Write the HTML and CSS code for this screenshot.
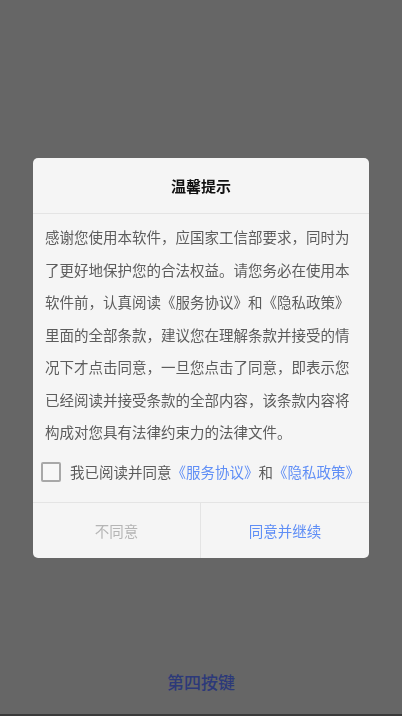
FILE: index.html
```html
<!DOCTYPE html>
<html lang="zh-CN">
<head>
<meta charset="utf-8">
<title>温馨提示</title>
<link rel="stylesheet" href="styles.css">
</head>
<body>
<div class="page">
  <div class="page-main"></div>
  <div class="page-button">第四按键</div>
  <div class="page-edge"></div>
</div>
<div class="overlay">
  <div class="dialog">
    <div class="dialog-title">温馨提示</div>
    <div class="dialog-body">感谢您使用本软件，应国家工信部要求，同时为了更好地保护您的合法权益。请您务必在使用本软件前，认真阅读《服务协议》和《隐私政策》里面的全部条款，建议您在理解条款并接受的情况下才点击同意，一旦您点击了同意，即表示您已经阅读并接受条款的全部内容，该条款内容将构成对您具有法律约束力的法律文件。</div>
    <label class="agree">
      <span class="checkbox"></span>
      <span class="agree-text">我已阅读并同意<span class="link">《服务协议》</span>和<span class="link">《隐私政策》</span></span>
    </label>
    <div class="dialog-actions">
      <div class="action action-cancel">不同意</div>
      <div class="action action-ok">同意并继续</div>
    </div>
  </div>
</div>
</body>
</html>
```
FILE: styles.css
```css
html, body {
  margin: 0;
  padding: 0;
}
body {
  width: 402px;
  height: 716px;
  overflow: hidden;
  background: #666666;
  font-family: "Noto Sans CJK SC", "Noto Sans", sans-serif;
}
.page {
  height: 716px;
  display: flex;
  flex-direction: column;
}
.page-main {
  flex: 1;
}
.page-button {
  text-align: center;
  font-size: 17px;
  line-height: 24px;
  font-weight: 500;
  color: #2c3979;
  padding-bottom: 20px;
}
.page-edge {
  height: 2px;
  background: #3a3a3a;
}
.overlay {
  position: fixed;
  inset: 0;
  display: flex;
  align-items: center;
  justify-content: center;
}
.dialog {
  width: 336px;
  background: #f5f5f5;
  border-radius: 5px;
  overflow: hidden;
}
.dialog-title {
  height: 55px;
  line-height: 55px;
  text-align: center;
  font-size: 15px;
  font-weight: 700;
  color: #111111;
  border-bottom: 1px solid #e4e4e4;
}
.dialog-body {
  padding: 7px 12px 0;
  font-size: 14.5px;
  line-height: 32.5px;
  color: #5c5c5c;
}
.agree {
  display: flex;
  align-items: center;
  gap: 9px;
  padding: 13px 8px 20px;
  font-size: 14.5px;
  line-height: 20px;
  color: #5c5c5c;
  white-space: nowrap;
}
.checkbox {
  box-sizing: border-box;
  width: 20px;
  height: 20px;
  flex: none;
  border: 2px solid #a8a8a8;
  border-radius: 2px;
  background: #f7f7f7;
}
.link {
  color: #5f8ef6;
}
.dialog-actions {
  display: grid;
  grid-template-columns: 1fr 1fr;
  border-top: 1px solid #e4e4e4;
}
.action {
  height: 55px;
  line-height: 55px;
  text-align: center;
  font-size: 14.5px;
}
.action-cancel {
  color: #b5b5b5;
  border-right: 1px solid #e4e4e4;
}
.action-ok {
  color: #5f8ef6;
}
```
